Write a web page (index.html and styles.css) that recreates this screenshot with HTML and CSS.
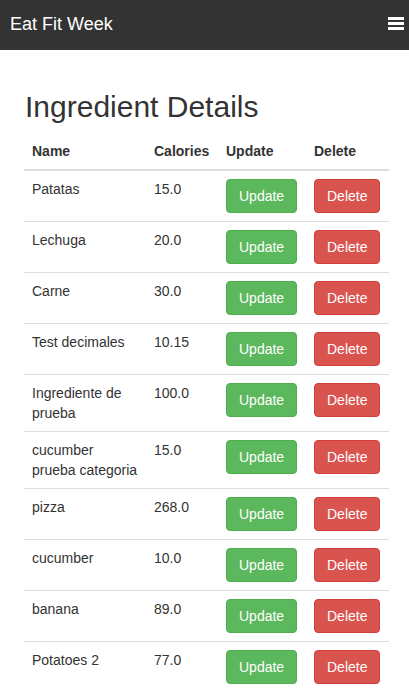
FILE: index.html
```html
<!DOCTYPE html>
<html>
<head>
<meta charset="utf-8">
<link rel="stylesheet" href="styles.css">
</head>
<body>
<nav class="navbar">
  <span class="brand">Eat Fit Week</span>
  <svg class="menu" width="16" height="13" viewBox="0 0 16 13"><rect x="0" y="0" width="16" height="3" fill="#fff"/><rect x="0" y="5" width="16" height="3" fill="#fff"/><rect x="0" y="10" width="16" height="3" fill="#fff"/></svg>
</nav>
<main class="container">
  <h2 class="title">Ingredient Details</h2>
  <table class="table">
    <colgroup><col class="c-name"><col class="c-cal"><col class="c-upd"><col class="c-del"></colgroup>
    <thead>
      <tr><th>Name</th><th>Calories</th><th>Update</th><th>Delete</th></tr>
    </thead>
    <tbody>
      <tr><td>Patatas</td><td>15.0</td><td><button class="btn btn-success">Update</button></td><td><button class="btn btn-danger">Delete</button></td></tr>
      <tr><td>Lechuga</td><td>20.0</td><td><button class="btn btn-success">Update</button></td><td><button class="btn btn-danger">Delete</button></td></tr>
      <tr><td>Carne</td><td>30.0</td><td><button class="btn btn-success">Update</button></td><td><button class="btn btn-danger">Delete</button></td></tr>
      <tr><td>Test decimales</td><td>10.15</td><td><button class="btn btn-success">Update</button></td><td><button class="btn btn-danger">Delete</button></td></tr>
      <tr><td>Ingrediente de prueba</td><td>100.0</td><td><button class="btn btn-success">Update</button></td><td><button class="btn btn-danger">Delete</button></td></tr>
      <tr><td>cucumber prueba categoria</td><td>15.0</td><td><button class="btn btn-success">Update</button></td><td><button class="btn btn-danger">Delete</button></td></tr>
      <tr><td>pizza</td><td>268.0</td><td><button class="btn btn-success">Update</button></td><td><button class="btn btn-danger">Delete</button></td></tr>
      <tr><td>cucumber</td><td>10.0</td><td><button class="btn btn-success">Update</button></td><td><button class="btn btn-danger">Delete</button></td></tr>
      <tr><td>banana</td><td>89.0</td><td><button class="btn btn-success">Update</button></td><td><button class="btn btn-danger">Delete</button></td></tr>
      <tr><td>Potatoes 2</td><td>77.0</td><td><button class="btn btn-success">Update</button></td><td><button class="btn btn-danger">Delete</button></td></tr>
    </tbody>
  </table>
</main>
</body>
</html>
```
FILE: styles.css
```css
html, body {
  margin: 0;
  padding: 0;
}
body {
  font-family: "Liberation Sans", Arial, sans-serif;
  font-size: 14px;
  line-height: 20px;
  color: #333;
  background: #fff;
}
.navbar {
  height: 50px;
  background: #333;
  display: flex;
  align-items: center;
  justify-content: space-between;
  padding: 0 5px 0 10px;
  box-sizing: border-box;
}
.brand {
  color: #fff;
  font-size: 18px;
  line-height: 20px;
  margin-top: -2px;
}
.menu {
  display: block;
  margin-top: -3px;
}
.container {
  padding: 0 20px 0 24px;
}
.title {
  margin: 40px 0 10px 1px;
  font-size: 30px;
  font-weight: 500;
  line-height: 33px;
  color: #333;
}
.table {
  width: 365px;
  border-collapse: collapse;
  border-spacing: 0;
  table-layout: fixed;
}
.c-name { width: 122px; }
.c-cal { width: 72px; }
.c-upd { width: 88px; }
.c-del { width: 83px; }
.table th {
  text-align: left;
  font-weight: bold;
  padding: 8px;
  vertical-align: bottom;
  border-bottom: 2px solid #ddd;
  line-height: 20px;
}
.table td {
  padding: 8px;
  vertical-align: top;
  border-top: 1px solid #ddd;
  line-height: 20px;
}
.table tbody tr:first-child td {
  border-top: 0;
}
.btn {
  display: inline-block;
  font-family: "Liberation Sans", Arial, sans-serif;
  font-size: 14px;
  line-height: 20px;
  padding: 6px 12px;
  border: 1px solid transparent;
  border-radius: 4px;
  color: #fff;
  margin: 0;
  cursor: pointer;
}
.btn-success {
  background: #5cb85c;
  border-color: #4cae4c;
}
.btn-danger {
  background: #d9534f;
  border-color: #d43f3a;
}
```
